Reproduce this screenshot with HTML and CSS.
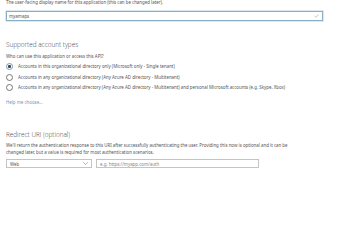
FILE: index.html
```html
<!DOCTYPE html>
<html>
<head>
<meta charset="utf-8">
<link rel="stylesheet" href="styles.css">
</head>
<body>
<div class="page">
  <div class="hint">The user-facing display name for this application (this can be changed later).</div>
  <div class="name-input">
    <span class="value">myamaps</span>
    <svg class="check" width="5" height="4" viewBox="0 0 5 4"><path d="M0.5 2 L2 3.3 L4.5 0.5" fill="none" stroke="#9aa" stroke-width="0.6"/></svg>
  </div>

  <div class="section-title">Supported account types</div>
  <div class="question">Who can use this application or access this API?</div>
  <div class="radios">
    <div class="radio-row"><span class="radio checked"></span><span>Accounts in this organizational directory only (Microsoft only - Single tenant)</span></div>
    <div class="radio-row"><span class="radio"></span><span>Accounts in any organizational directory (Any Azure AD directory - Multitenant)</span></div>
    <div class="radio-row"><span class="radio"></span><span>Accounts in any organizational directory (Any Azure AD directory - Multitenant) and personal Microsoft accounts (e.g. Skype, Xbox)</span></div>
  </div>
  <div class="help">Help me choose...</div>

  <div class="section-title redirect">Redirect URI (optional)</div>
  <div class="desc">We'll return the authentication response to this URI after successfully authenticating the user. Providing this now is optional and it can be changed later, but a value is required for most authentication scenarios.</div>
  <div class="uri-row">
    <div class="select"><span>Web</span><svg width="5" height="3" viewBox="0 0 5 3"><path d="M0.3 0.3 L2.5 2.5 L4.7 0.3" fill="none" stroke="#666" stroke-width="0.5"/></svg></div>
    <div class="uri-input">e.g. https://myapp.com/auth</div>
  </div>
</div>
</body>
</html>
```
FILE: styles.css
```css
html, body {
  margin: 0;
  padding: 0;
  background: #fff;
}
.page {
  font-family: "Noto Sans", "Open Sans", sans-serif;
  color: #555;
  padding: 0 0 0 6px;
  width: 320px;
}
.hint {
  font-size: 4.4px;
  line-height: 6px;
  margin-top: -1px;
  color: #555;
}
.name-input {
  margin-top: 6px;
  width: 310px;
  height: 8px;
  border: 1px solid #8ab0c8;
  box-shadow: 0 0 0 0.5px #b5cfdf;
  display: flex;
  align-items: center;
  justify-content: space-between;
  padding: 0 3px 0 2px;
  box-sizing: content-box;
  font-size: 4.4px;
  color: #555;
}
.check { display: block; }
.section-title {
  font-family: "Open Sans", "Noto Sans", sans-serif;
  font-weight: 300;
  font-size: 6.4px;
  line-height: 8px;
  margin-top: 20px;
  color: #444;
}
.question {
  font-size: 4.4px;
  line-height: 6px;
  margin-top: 3.5px;
  color: #555;
}
.radios {
  margin-top: 4.5px;
  display: flex;
  flex-direction: column;
  gap: 3.5px;
}
.radio-row {
  display: flex;
  align-items: center;
  gap: 5px;
  font-size: 4.4px;
  line-height: 7px;
  color: #555;
}
.radio {
  width: 5px;
  height: 5px;
  border: 0.7px solid #777;
  border-radius: 50%;
  position: relative;
  flex: none;
}
.radio.checked { border-color: #7a98b0; }
.radio.checked::after {
  content: "";
  position: absolute;
  left: 1.4px;
  top: 1.4px;
  width: 2.2px;
  height: 2.2px;
  border-radius: 50%;
  background: #444;
}
.help {
  margin-top: 8px;
  font-size: 4.4px;
  line-height: 6px;
  color: #6a9acb;
}
.section-title.redirect { margin-top: 26px; }
.desc {
  font-size: 4.4px;
  line-height: 6.5px;
  margin-top: 3px;
  width: 285px;
  color: #555;
}
.uri-row {
  margin-top: 4px;
  display: flex;
  gap: 4px;
}
.select {
  width: 78px;
  height: 7px;
  border: 0.7px solid #c4c4c4;
  display: flex;
  align-items: center;
  justify-content: space-between;
  padding: 0 3px 0 3px;
  font-size: 4.4px;
  color: #555;
}
.select svg { display: block; }
.uri-input {
  width: 155px;
  height: 7px;
  border: 0.7px solid #c4c4c4;
  padding: 0 3px;
  display: flex;
  align-items: center;
  font-size: 4.4px;
  color: #888;
}
```
